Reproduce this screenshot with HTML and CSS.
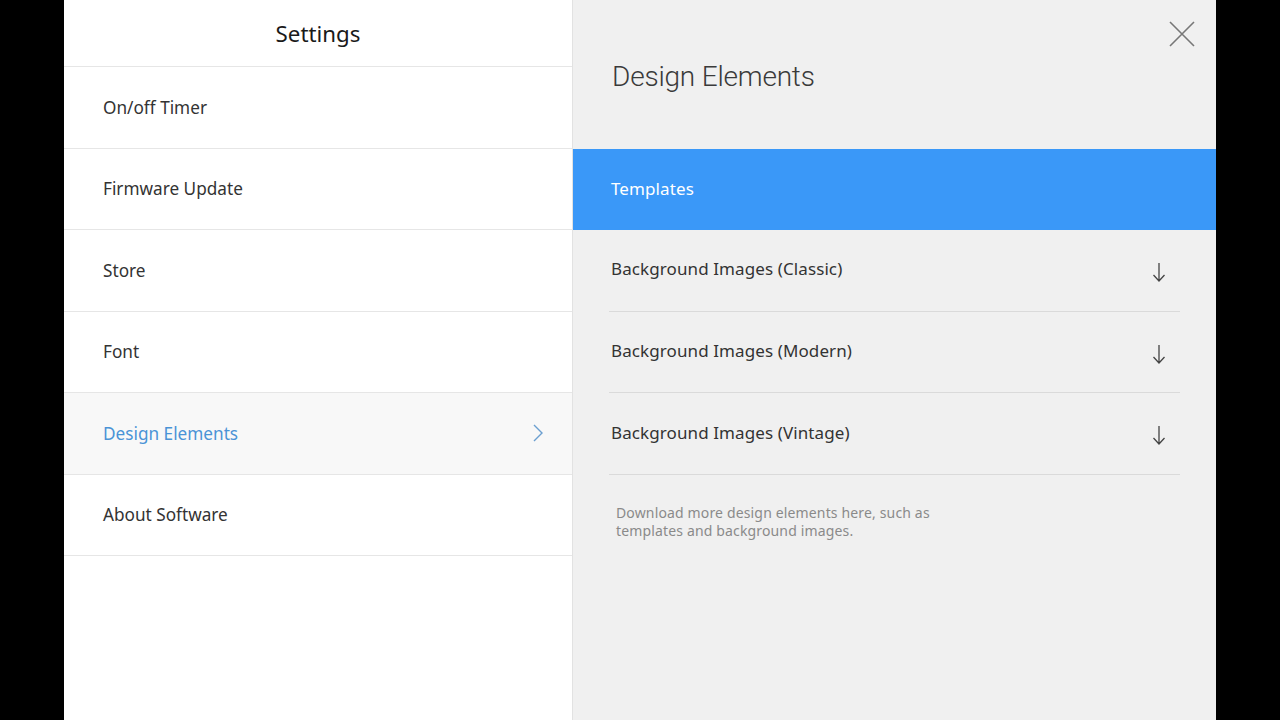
FILE: index.html
```html
<!DOCTYPE html>
<html>
<head>
<meta charset="utf-8">
<link rel="stylesheet" href="styles.css">
</head>
<body>
<div class="screen">
  <aside class="menu">
    <header class="menu-head">Settings</header>
    <ul class="menu-list">
      <li class="menu-item">On/off Timer</li>
      <li class="menu-item">Firmware Update</li>
      <li class="menu-item">Store</li>
      <li class="menu-item">Font</li>
      <li class="menu-item active">Design Elements
        <svg class="chev" width="12" height="18" viewBox="0 0 12 18"><path d="M2 1 L10 9 L2 17" fill="none" stroke="#6b9fd0" stroke-width="1.4"/></svg>
      </li>
      <li class="menu-item">About Software</li>
    </ul>
  </aside>
  <main class="detail">
    <div class="detail-head">
      <h1 class="detail-title">Design Elements</h1>
      <svg class="close" width="26" height="26" viewBox="0 0 26 26"><path d="M1 1 L25 25 M25 1 L1 25" stroke="#777" stroke-width="1.6" fill="none"/></svg>
    </div>
    <div class="row selected">Templates</div>
    <div class="rows">
      <div class="row">Background Images (Classic)<svg class="dl" width="14" height="20" viewBox="0 0 14 20"><path d="M7 1 V19 M1.5 13 L7 19 L12.5 13" fill="none" stroke="#444" stroke-width="1.3"/></svg></div>
      <div class="row">Background Images (Modern)<svg class="dl" width="14" height="20" viewBox="0 0 14 20"><path d="M7 1 V19 M1.5 13 L7 19 L12.5 13" fill="none" stroke="#444" stroke-width="1.3"/></svg></div>
      <div class="row">Background Images (Vintage)<svg class="dl" width="14" height="20" viewBox="0 0 14 20"><path d="M7 1 V19 M1.5 13 L7 19 L12.5 13" fill="none" stroke="#444" stroke-width="1.3"/></svg></div>
    </div>
    <p class="note">Download more design elements here, such as<br>templates and background images.</p>
  </main>
</div>
</body>
</html>
```

FILE: styles.css
```css
* { box-sizing: border-box; }
html, body { margin: 0; padding: 0; background: #000; }
body { font-family: "Noto Sans", "Open Sans", sans-serif; }
.screen {
  width: 1280px;
  height: 720px;
  display: flex;
  padding: 0 64px;
}
.menu {
  width: 509px;
  background: #fff;
  border-right: 1px solid #e2e2e2;
  display: flex;
  flex-direction: column;
}
.menu-head {
  height: 67px;
  border-bottom: 1px solid #e6e6e6;
  display: flex;
  align-items: center;
  justify-content: center;
  font-size: 22.3px;
  color: #1a1a1a;
}
.menu-list { list-style: none; margin: 0; padding: 0; }
.menu-item {
  height: 81.5px;
  border-bottom: 1px solid #e6e6e6;
  display: flex;
  align-items: center;
  justify-content: space-between;
  padding: 0 28px 0 39px;
  font-size: 17.2px;
  color: #333;
}
.menu-item.active { background: #f8f8f8; color: #4a93d6; }
.detail {
  flex: 1;
  background: #f0f0f0;
  display: flex;
  flex-direction: column;
}
.detail-head {
  height: 149px;
  display: flex;
  justify-content: space-between;
  align-items: flex-start;
  padding: 0 21px 0 39px;
}
.detail-title {
  margin: 63px 0 0;
  font-family: "Roboto", sans-serif;
  font-weight: 300;
  font-size: 28px;
  letter-spacing: -0.2px;
  color: #3a3a3a;
  line-height: 1;
}
.close { margin-top: 21px; }
.row.selected {
  height: 81px;
  background: #3a98f8;
  color: #fff;
  padding: 0 38px 3px;
  border: none;
  margin: 0;
}
.rows { padding: 0 36px; }
.row {
  height: 81.7px;
  border-bottom: 1px solid #dadada;
  display: flex;
  align-items: center;
  justify-content: space-between;
  padding: 0 14px 3px 2px;
  font-size: 17px;
  color: #333;
  font-family: "Noto Sans", sans-serif;
  letter-spacing: 0.1px;
}
.dl { margin-top: 6px; }
.note {
  margin: 29px 0 0 43px;
  font-size: 14px;
  line-height: 18px;
  color: #8a8a8a;
  letter-spacing: 0.15px;
}
```
